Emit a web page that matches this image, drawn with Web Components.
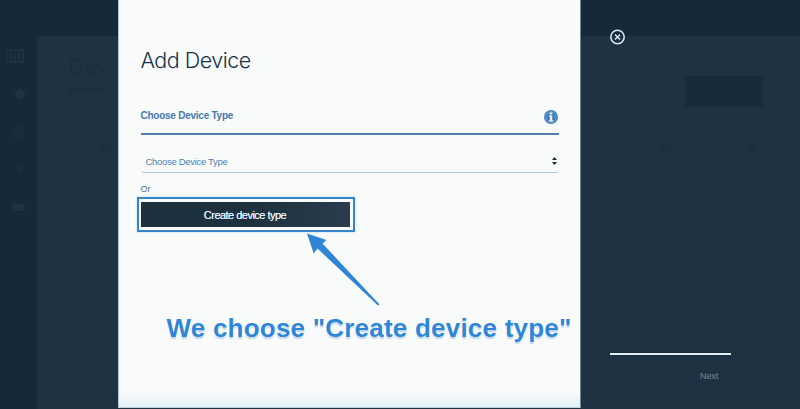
<!DOCTYPE html>
<html lang="en">
<head>
<meta charset="utf-8">
<title>Add Device</title>
<style>
html,body{margin:0;height:100%;overflow:hidden}
body{background:#1f3241;font-family:"Liberation Sans",Arial,sans-serif}
</style>
</head>
<body>
<device-app></device-app>
<script>
function define(name, html) {
  const t = document.createElement('template');
  t.innerHTML = html;
  customElements.define(name, class extends HTMLElement {
    constructor() {
      super();
      this.attachShadow({mode: 'open'}).appendChild(t.content.cloneNode(true));
    }
  });
}

define('nav-rail', `
<style>
:host{display:flex;flex-direction:column;width:37px;box-sizing:border-box;padding:12px 0 0 6px;background:#162938;flex:none}
svg{display:block;width:20px;height:16px;fill:#1f3340;stroke:#203441;flex:none}
svg+svg{margin-top:22px}
</style>
<svg viewBox="0 0 20 16"><path d="M1 2h16v12H1zM5 2v12M9 5v8M13 5v8" fill="none" stroke-width="1.5"/></svg>
<svg viewBox="0 0 20 16"><circle cx="14" cy="8" r="4.5"/></svg>
<svg viewBox="0 0 20 16"><path d="M6 12h12M9 10V5M12 12V2M15 12V2M17 10V5" fill="none"/></svg>
<svg viewBox="0 0 20 16"><path d="M11 4l5 6M16 4l-3 4" fill="none"/></svg>
<svg viewBox="0 0 20 16"><path d="M7 4h11v6H7zM10 14h5"/></svg>`);

define('page-backdrop', `
<style>
:host{display:flex;flex-direction:column;height:409px;color:#192c3a}
header{height:36px;flex:none;background:#162938}
.body{display:flex;flex:1}
main{flex:1;padding:17px 37px 0 32px}
.top{display:flex;justify-content:space-between}
h1{font:300 20px/28px Inter,sans-serif;margin:0;letter-spacing:.5px}
.tab{font:bold 9px/12px "Liberation Sans",sans-serif;margin-top:3px;letter-spacing:.7px}
.action{width:78px;height:31px;margin-top:23px;background:#182b39}
.cols{display:grid;grid-template-columns:560px 87px 1fr;padding-left:32px;margin-top:39px;font-size:9px;line-height:12px}
.cols i{width:9px;height:8px;background:#1c2f3d}
</style>
<header></header>
<div class="body"><nav-rail></nav-rail><main>
<div class="top"><div><h1>Dev</h1><div class="tab">Browse</div></div><div class="action"></div></div>
<div class="cols"><i></i><i></i><i></i></div>
</main></div>`);

define('info-icon', `
<style>:host{display:block;width:14px;height:14px;margin-right:1px}svg{display:block}</style>
<svg width="14" height="14" viewBox="0 0 14 14"><circle cx="7" cy="7" r="7" fill="#4480bd"/><circle cx="7" cy="7" r="5.3" fill="none" stroke="#85b0d8" stroke-width=".6"/><path d="M5.7 2.5h2.6v2H5.7zM5 5.5h3.2v4.7h1v1.4H5v-1.4h1V6.8H5z" fill="#eef6fb"/></svg>`);

define('section-heading', `
<style>
:host{display:flex;justify-content:space-between;align-items:flex-start;height:25px;box-sizing:border-box;border-bottom:2px solid #5380aa;color:#4579af;font:bold 10px/12px "Liberation Sans",Arial,sans-serif}
.label{letter-spacing:-.25px}
</style><span class="label"><slot></slot></span><info-icon></info-icon>`);

define('select-field', `
<style>
:host{display:flex;justify-content:space-between;align-items:flex-start;height:22px;box-sizing:border-box;border-bottom:1px solid #a6c9df;border-radius:3px;padding:5px 2px 0 5px;color:#4c80b4;font:9.5px/12px "Liberation Sans",Arial,sans-serif}
span{letter-spacing:-.31px}
svg{display:block;margin-top:1px}
</style><span><slot></slot></span><svg width="5" height="8" viewBox="0 0 5 8"><path d="M0 3L2.5 0 5 3zM0 5h5L2.5 8z" fill="#172c40"/></svg>`);

define('action-button', `
<style>
:host{display:flex;width:218px;height:35px;box-sizing:border-box;padding:3px 3px 3px 2px;border:2px solid #3684cb;box-shadow:0 0 2px #b4d7eb;background:#f9fbfb}
button{flex:1;margin:0;border:0;padding:0;background:linear-gradient(90deg,#1d303e 50%,#2a3d4c);color:#e3f0fa;font:11px/26px "Liberation Sans",Arial,sans-serif;letter-spacing:-.52px;text-shadow:0 0 .5px #d9ebfa}
</style><button><slot></slot></button>`);

define('callout-note', `
<style>
:host{display:block;color:#2f86d7}
svg{display:block;margin-left:166px;fill:currentColor}
p{margin:4px 0 0 26px;white-space:nowrap;font:bold 26px/34px "Liberation Sans",Arial,sans-serif;letter-spacing:.22px;text-shadow:-1px 0 1px #fff,1px 0 1px #fff,0 2px 1px #bfd7e6}
</style>
<svg width="78" height="74" viewBox="0 0 78 74"><path d="M0 0.5L19.5 7 15.5 10.5 72.5 71.5 71 72.5 10.5 15.5 6.7 20.5z"/></svg>
<p><slot></slot></p>`);

define('device-dialog', `
<style>
:host{display:block;width:463px;height:408px;box-sizing:border-box;padding:46px 22px 0 21.5px;background:linear-gradient(#f9fbfb 0 390px,#e2f0f5 408px);border-left:1px solid #a9c7d8;border-right:1px solid #6d8495;border-bottom:1px solid #b8d3df}
h2{margin:0;font:300 21.5px/28px Inter,"Open Sans",sans-serif;color:#173047;letter-spacing:-.52px}
section-heading{margin-top:36px;width:418px}
select-field{margin-top:16px;width:418px}
.or{margin-top:10px;font-size:9px;line-height:12px;color:#47749f}
action-button{margin:2px 0 0 -4px}
callout-note{margin-top:1px}
</style>
<h2>Add Device</h2>
<section-heading>Choose Device Type</section-heading>
<select-field>Choose Device Type</select-field>
<div class="or">Or</div>
<action-button>Create device type</action-button>
<callout-note>We choose "Create device type"</callout-note>`);

define('wizard-controls', `
<style>
:host{display:flex;flex-direction:column;width:121px;height:409px;box-sizing:border-box;padding-top:29px}
svg{display:block}
.track{height:2px;background:#e3eef4;margin-top:308px;box-shadow:0 0 2px #102333}
.next{align-self:flex-end;margin:15px 13px 0 0;font-size:9px;line-height:12px;color:#74899a;letter-spacing:-.15px}
</style>
<svg width="16" height="16" viewBox="0 0 16 16" fill="none" stroke="#d7ebf7" stroke-width="1.5"><circle cx="7.5" cy="8" r="6.7"/><path d="M5 5.5l5 5M10 5.5l-5 5"/></svg>
<div class="track"></div><div class="next">Next</div>`);

define('device-app', `
<style>
:host{display:block;position:relative;width:800px;height:409px;overflow:hidden;background:#1f3241}
.overlay{position:absolute;inset:0;display:flex;padding-left:118px;gap:29px;box-sizing:border-box}
</style>
<page-backdrop></page-backdrop>
<div class="overlay"><device-dialog></device-dialog><wizard-controls></wizard-controls></div>`);
</script>
</body>
</html>
